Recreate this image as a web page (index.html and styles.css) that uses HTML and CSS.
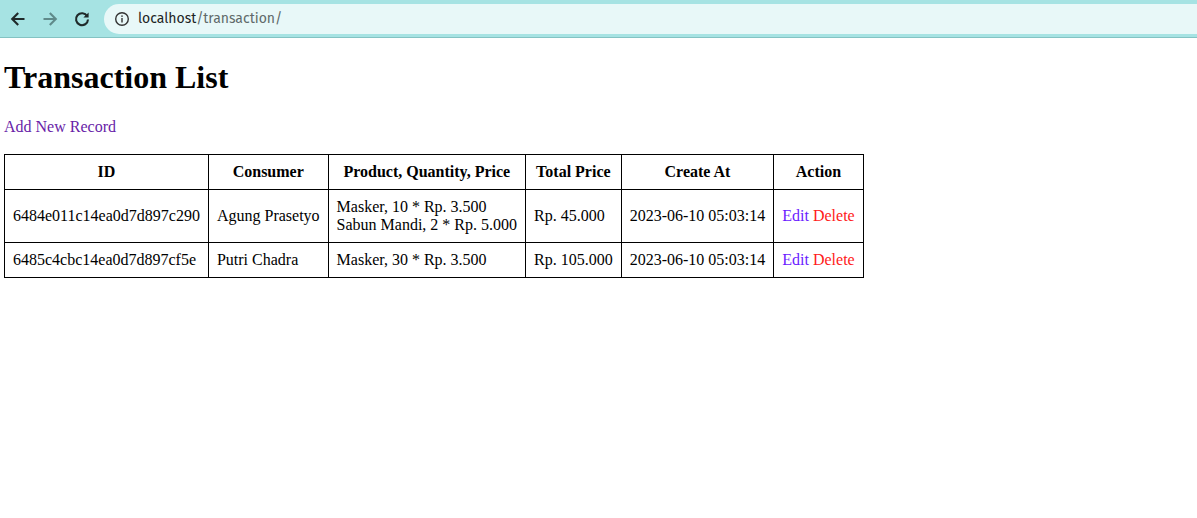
FILE: index.html
```html
<!DOCTYPE html>
<html>
<head>
<meta charset="utf-8">
<link rel="stylesheet" href="styles.css">
</head>
<body>
<div class="chrome">
  <div class="navs">
    <svg class="nav" width="20" height="20" viewBox="0 0 20 20"><path d="M16.5 10H4.5M10.2 4L4.2 10L10.2 16" fill="none" stroke="#1f2a2a" stroke-width="2.1"/></svg>
    <svg class="nav" width="20" height="20" viewBox="0 0 20 20"><path d="M3.5 10H15.5M9.8 4L15.8 10L9.8 16" fill="none" stroke="#5f8a8a" stroke-width="2.1"/></svg>
    <svg class="nav" width="20" height="20" viewBox="0 0 20 20"><path d="M15.2 7.2A6 6 0 1 0 16 10.5" fill="none" stroke="#1f2a2a" stroke-width="2.1"/><path d="M16.6 3.4V8.6H11.4Z" fill="#1f2a2a"/></svg>
  </div>
  <div class="urlbar">
    <svg width="16" height="16" viewBox="0 0 16 16"><circle cx="8" cy="8" r="6.3" fill="none" stroke="#333" stroke-width="1.4"/><rect x="7.3" y="7" width="1.4" height="4.5" fill="#333"/><rect x="7.3" y="4.4" width="1.4" height="1.5" fill="#333"/></svg>
    <span class="host">localhost</span><span class="path">/transaction/</span>
  </div>
</div>
<div class="page">
  <h1 class="title">Transaction List</h1>
  <a class="add" href="#">Add New Record</a>
  <table class="grid">
    <thead>
      <tr><th>ID</th><th>Consumer</th><th>Product, Quantity, Price</th><th>Total Price</th><th>Create At</th><th>Action</th></tr>
    </thead>
    <tbody>
      <tr>
        <td>6484e011c14ea0d7d897c290</td>
        <td>Agung Prasetyo</td>
        <td>Masker, 10 * Rp. 3.500<br>Sabun Mandi, 2 * Rp. 5.000</td>
        <td>Rp. 45.000</td>
        <td>2023-06-10 05:03:14</td>
        <td><a class="edit" href="#">Edit</a> <a class="del" href="#">Delete</a></td>
      </tr>
      <tr>
        <td>6485c4cbc14ea0d7d897cf5e</td>
        <td>Putri Chadra</td>
        <td>Masker, 30 * Rp. 3.500</td>
        <td>Rp. 105.000</td>
        <td>2023-06-10 05:03:14</td>
        <td><a class="edit" href="#">Edit</a> <a class="del" href="#">Delete</a></td>
      </tr>
    </tbody>
  </table>
</div>
</body>
</html>
```
FILE: styles.css
```css
html, body { margin: 0; padding: 0; background: #fff; }
body { font-family: "Liberation Serif", serif; font-size: 16px; color: #000; }
.chrome {
  height: 37px;
  background: #a6e3e3;
  border-bottom: 1px solid #84c3c3;
  display: flex;
  align-items: center;
  overflow: hidden;
}
.navs { display: flex; gap: 12px; padding-left: 8px; width: 96px; flex: none; }
.nav { display: block; }
.urlbar {
  flex: none;
  width: 1120px;
  height: 30px;
  background: #e8f8f8;
  border-radius: 15px;
  display: flex;
  align-items: center;
  padding-left: 10px;
  font-family: "Fira Sans", "Open Sans", "Noto Sans", sans-serif;
  font-size: 14px;
}
.urlbar svg { margin-right: 8px; }
.host { color: #1d2424; }
.path { color: #606a6a; }
.page { padding: 0 4px; display: flow-root; }
.title { font-size: 32px; font-weight: bold; margin: 21.44px 0; line-height: 37px; }
.add { display: block; color: #681da8; text-decoration: none; line-height: 18.4px; margin-bottom: 17.4px; }
.grid { border-collapse: collapse; }
.grid th, .grid td { border: 1px solid #000; padding: 8px; line-height: 18px; }
.grid th { text-align: center; font-weight: bold; }
.grid td { text-align: left; }
.edit { color: #6a1aff; text-decoration: none; }
.del { color: #ff1a1a; text-decoration: none; }
```
